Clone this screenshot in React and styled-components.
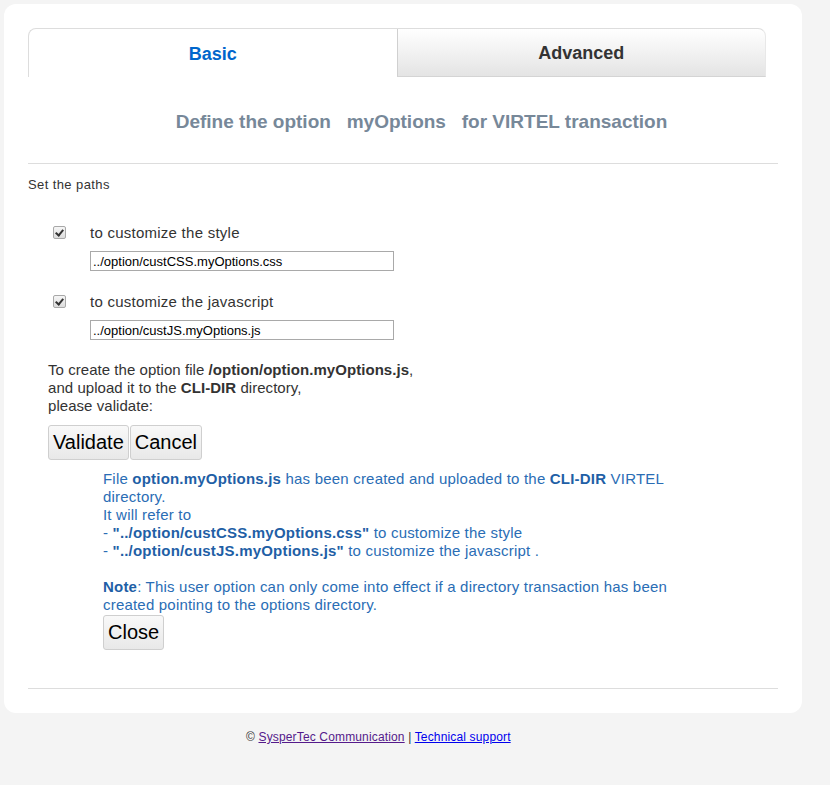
import styled, { createGlobalStyle } from "styled-components";

const GlobalStyle = createGlobalStyle`
  html, body {
    margin: 0;
    padding: 0;
    background: #f4f4f4;
    font-family: "Liberation Sans", Arial, sans-serif;
    color: #333;
  }
`;

const Page = styled.div`
  width: 830px;
  min-height: 785px;
  padding-top: 4px;
  box-sizing: border-box;
`;

const Card = styled.div`
  width: 798px;
  margin-left: 4px;
  background: #fff;
  border-radius: 12px;
  padding: 24px 24px 24px;
  box-sizing: border-box;
`;

const Tabs = styled.div`
  width: 738px;
  display: flex;
`;

const Tab = styled.div`
  flex: 1;
  height: 49px;
  padding-top: 2px;
  display: flex;
  align-items: center;
  justify-content: center;
  font-size: 18px;
  font-weight: bold;
  box-sizing: border-box;
  border-top: 1px solid #ddd;
  color: ${(p) => (p.$active ? "#0066cc" : "#333")};
  background: ${(p) =>
    p.$active ? "#fff" : "linear-gradient(to bottom, #ffffff, #e4e4e4)"};
  border-left: 1px solid ${(p) => (p.$active ? "#ddd" : "#d0d0d0")};
  border-bottom: ${(p) => (p.$active ? "none" : "1px solid #d4d4d4")};
  border-radius: ${(p) => (p.$active ? "8px 0 0 0" : "0 8px 0 0")};
  border-right: ${(p) => (p.$active ? "none" : "1px solid #e8e8e8")};
`;

const Title = styled.h2`
  margin: 35px 0 0;
  padding-left: 37px;
  text-align: center;
  font-size: 19px;
  line-height: 20px;
  font-weight: bold;
  color: #778899;
  white-space: pre;
`;

const Rule = styled.hr`
  border: none;
  border-top: 1px solid #dddddd;
  margin: ${(p) => p.$margin || "0"};
`;

const SmallLabel = styled.div`
  font-size: 13px;
  letter-spacing: 0.4px;
  line-height: 14px;
`;

const PathList = styled.div`
  padding-left: 25px;
  margin-top: 30px;
  display: flex;
  flex-direction: column;
  gap: 20px;
`;

const PathItem = styled.div`
  display: flex;
  flex-direction: column;
  gap: 9px;
`;

const CheckRow = styled.label`
  display: flex;
  align-items: center;
  height: 20px;
  font-size: 15px;
  letter-spacing: 0.25px;
  color: #333;
`;

const Check = styled.input`
  appearance: none;
  position: relative;
  width: 13px;
  height: 13px;
  margin: 0 24px 0 0;
  box-sizing: border-box;
  border: 1px solid #a8a8a8;
  border-radius: 2px;
  background: linear-gradient(to bottom, #f6f6f6, #dcdcdc);

  &:checked::after {
    content: "";
    position: absolute;
    left: 3px;
    top: 1px;
    width: 3px;
    height: 6px;
    border: solid #333;
    border-width: 0 2px 2px 0;
    transform: rotate(40deg);
  }
`;

const PathInput = styled.input`
  margin-left: 37px;
  width: 304px;
  height: 20px;
  box-sizing: border-box;
  border: 1px solid #a9a9a9;
  padding: 1px 2px;
  font-family: "Liberation Sans", Arial, sans-serif;
  font-size: 13px;
  color: #000;
`;

const Info = styled.p`
  margin: 21px 0 0 20px;
  font-size: 15px;
  letter-spacing: 0.05px;
  line-height: 18px;
  color: #333;
`;

const Buttons = styled.div`
  display: flex;
  gap: 1px;
  margin: 10px 0 0 20px;
`;

const Button = styled.button`
  font-family: "Liberation Sans", Arial, sans-serif;
  font-size: 20px;
  line-height: 23px;
  padding: 5px 4px;
  color: #000;
  background: linear-gradient(to bottom, #f9f9f9, #e8e8e8);
  border: 1px solid #cfcfcf;
  border-radius: 3px;
  cursor: pointer;
`;

const Message = styled.div`
  margin: 10px 0 0 75px;
  width: 580px;
  font-size: 15px;
  letter-spacing: 0.2px;
  line-height: 18px;
  color: #2a6db5;

  b {
    color: #1f5fa6;
  }
`;

const CloseWrap = styled.div`
  margin: 1px 0 0 75px;
`;

const Footer = styled.div`
  padding-left: 246px;
  margin-top: 17px;
  font-size: 12px;
  letter-spacing: 0.15px;
  line-height: 14px;
  color: #333;

  a {
    text-decoration: underline;
  }
`;

const VisitedLink = styled.a`
  color: #551a8b;
`;

const Link = styled.a`
  color: #0000ee;
`;

export default function App() {
  return (
    <Page>
      <GlobalStyle />
      <Card>
        <Tabs>
          <Tab $active>Basic</Tab>
          <Tab>Advanced</Tab>
        </Tabs>
        <Title>{"Define the option   myOptions   for VIRTEL transaction"}</Title>
        <Rule $margin="31px 0 14px" />
        <SmallLabel>Set the paths</SmallLabel>
        <PathList>
          <PathItem>
            <CheckRow>
              <Check type="checkbox" defaultChecked />
              to customize the style
            </CheckRow>
            <PathInput defaultValue="../option/custCSS.myOptions.css" />
          </PathItem>
          <PathItem>
            <CheckRow>
              <Check type="checkbox" defaultChecked />
              to customize the javascript
            </CheckRow>
            <PathInput defaultValue="../option/custJS.myOptions.js" />
          </PathItem>
        </PathList>
        <Info>
          To create the option file <b>/option/option.myOptions.js</b>,
          <br />
          and upload it to the <b>CLI-DIR</b> directory,
          <br />
          please validate:
        </Info>
        <Buttons>
          <Button>Validate</Button>
          <Button>Cancel</Button>
        </Buttons>
        <Message>
          File <b>option.myOptions.js</b> has been created and uploaded to the{" "}
          <b>CLI-DIR</b> VIRTEL directory.
          <br />
          It will refer to
          <br />- <b>"../option/custCSS.myOptions.css"</b> to customize the style
          <br />- <b>"../option/custJS.myOptions.js"</b> to customize the
          javascript .
          <br />
          <br />
          <b>Note</b>: This user option can only come into effect if a directory
          transaction has been created pointing to the options directory.
        </Message>
        <CloseWrap>
          <Button>Close</Button>
        </CloseWrap>
        <Rule $margin="38px 0 0" />
      </Card>
      <Footer>
        © <VisitedLink href="#">SysperTec Communication</VisitedLink> |{" "}
        <Link href="#">Technical support</Link>
      </Footer>
    </Page>
  );
}
